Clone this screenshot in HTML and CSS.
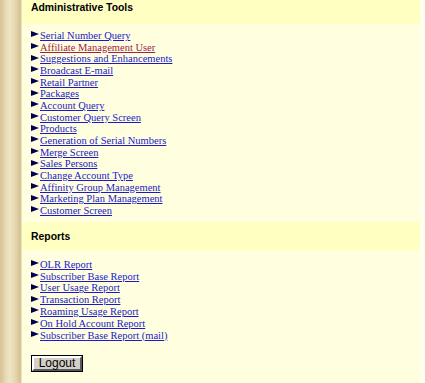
FILE: index.html
```html
<!DOCTYPE html>
<html>
<head>
<meta charset="utf-8">
<link rel="stylesheet" href="styles.css">
</head>
<body>
<div class="page">
  <div class="rail"></div>
  <div class="main">
    <div class="section-head">Administrative Tools</div>
    <ul class="links">
      <li><a href="#">Serial Number Query</a></li>
      <li><a href="#" class="visited">Affiliate Management User</a></li>
      <li><a href="#">Suggestions and Enhancements</a></li>
      <li><a href="#">Broadcast E-mail</a></li>
      <li><a href="#">Retail Partner</a></li>
      <li><a href="#">Packages</a></li>
      <li><a href="#">Account Query</a></li>
      <li><a href="#">Customer Query Screen</a></li>
      <li><a href="#">Products</a></li>
      <li><a href="#">Generation of Serial Numbers</a></li>
      <li><a href="#">Merge Screen</a></li>
      <li><a href="#">Sales Persons</a></li>
      <li><a href="#">Change Account Type</a></li>
      <li><a href="#">Affinity Group Management</a></li>
      <li><a href="#">Marketing Plan Management</a></li>
      <li><a href="#">Customer Screen</a></li>
    </ul>
    <div class="section-head reports">Reports</div>
    <ul class="links report-links">
      <li><a href="#">OLR Report</a></li>
      <li><a href="#">Subscriber Base Report</a></li>
      <li><a href="#">User Usage Report</a></li>
      <li><a href="#">Transaction Report</a></li>
      <li><a href="#">Roaming Usage Report</a></li>
      <li><a href="#">On Hold Account Report</a></li>
      <li><a href="#">Subscriber Base Report (mail)</a></li>
    </ul>
    <div class="actions"><button class="logout" type="button">Logout</button></div>
  </div>
  <div class="edge"></div>
</div>
</body>
</html>
```
FILE: styles.css
```css
html, body {
  margin: 0;
  padding: 0;
  height: 100%;
  background: #ffffe0;
}
.page {
  display: flex;
  min-height: 383px;
}
.rail {
  width: 22px;
  flex: none;
  background: linear-gradient(to right, #d6c494 0px, #dccca2 3px, #e8dcb6 6px, #efe5c4 10px, #e6d8b0 15px, #d9c89c 19px, #cdbb8a 20px, #e4d6ac 21px, #f4ecc8 22px);
}
.main {
  flex: 1;
  background: #ffffe0;
}
.edge {
  width: 5px;
  flex: none;
  background: #fffff0;
}
.section-head {
  background: #ffffc2;
  height: 24px;
  padding-left: 9px;
  font-family: "Liberation Sans", Arial, sans-serif;
  font-weight: bold;
  font-size: 10.4px;
  line-height: 14px;
  color: #000;
  box-sizing: border-box;
  padding-top: 1px;
}
.section-head.reports {
  height: 28px;
  padding-top: 8px;
  margin-top: 5px;
}
.links {
  list-style: none;
  margin: 0;
  padding: 6px 0 0 9px;
  font-family: "Liberation Serif", "Times New Roman", serif;
  font-size: 10.5px;
  line-height: 11.67px;
}
.report-links {
  padding-top: 9px;
  line-height: 11.8px;
}
.links li {
  display: flex;
  align-items: center;
}
.links li::before {
  content: "";
  width: 0;
  height: 0;
  border-top: 3px solid transparent;
  border-bottom: 3px solid transparent;
  border-left: 8px solid #000050;
  margin-right: 1px;
  margin-top: -3px;
}
.links a {
  color: #1a1acc;
  text-decoration: underline;
}
.links a.visited {
  color: #a0204a;
}
.actions {
  padding: 15px 0 0 10px;
}
.logout {
  display: block;
  font-family: "Liberation Sans", Arial, sans-serif;
  font-size: 12px;
  width: 50px;
  height: 15px;
  line-height: 11px;
  padding: 0;
  background: #d4d0c8;
  border: 2px solid;
  border-color: #ffffff #5a5a5a #5a5a5a #ffffff;
  outline: 1px solid #000;
  color: #000;
  box-sizing: border-box;
  height: 15px;
}
```
